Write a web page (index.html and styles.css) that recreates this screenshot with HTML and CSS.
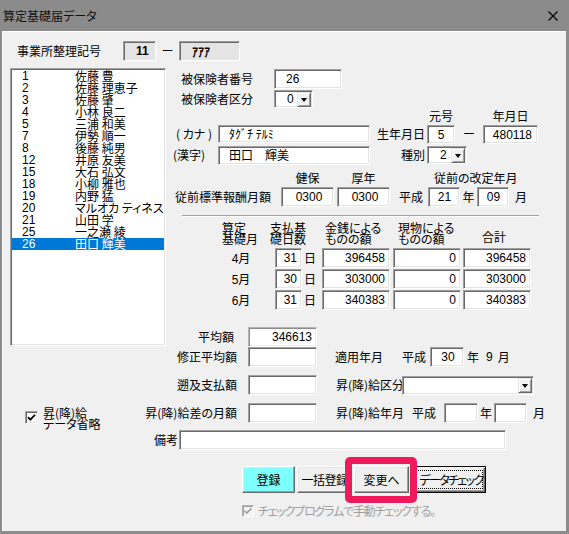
FILE: index.html
```html
<!DOCTYPE html>
<html lang="ja">
<head>
<meta charset="utf-8">
<title>算定基礎届データ</title>
<link rel="stylesheet" href="styles.css">
</head>
<body>
<div class="win">
  <div class="titlebar">
    <span class="title">算定基礎届データ</span>
    <svg class="close" width="10" height="10" viewBox="0 0 10 10"><path d="M0.5 0.5L9.5 9.5M9.5 0.5L0.5 9.5" stroke="#000" stroke-width="1.1" fill="none"/></svg>
  </div>
  <div class="body">
    <div class="office">
      <span class="office-lbl">事業所整理記号</span>
      <span class="ro ro1 n">11</span>
      <span class="dash">ー</span>
      <span class="ro ro2">ｱｱｱ</span>
    </div>
    <div class="main">
      <div class="leftcol">
        <div class="list">
          <div class="item"><span class="num n">1</span><span>佐藤 豊</span></div>
          <div class="item"><span class="num n">2</span><span>佐藤 理恵子</span></div>
          <div class="item"><span class="num n">3</span><span>佐藤 肇</span></div>
          <div class="item"><span class="num n">4</span><span>小林 良二</span></div>
          <div class="item"><span class="num n">5</span><span>三浦 和美</span></div>
          <div class="item"><span class="num n">7</span><span>伊勢 順一</span></div>
          <div class="item"><span class="num n">8</span><span>後藤 純男</span></div>
          <div class="item"><span class="num n">12</span><span>井原 友美</span></div>
          <div class="item"><span class="num n">15</span><span>大石 弘文</span></div>
          <div class="item"><span class="num n">18</span><span>小柳 雅也</span></div>
          <div class="item"><span class="num n">19</span><span>内野 猛</span></div>
          <div class="item"><span class="num n">20</span><span>マルオカ ティネス</span></div>
          <div class="item"><span class="num n">21</span><span>山田 学</span></div>
          <div class="item"><span class="num n">25</span><span>一之瀬 綾</span></div>
          <div class="item sel"><span class="num n">26</span><span>田口 輝美</span></div>
        </div>
        <div class="chkrow">
          <span class="chk"><svg width="11" height="11" viewBox="0 0 11 11"><path d="M2 5.2L4.3 7.6L9 2.8" stroke="#000" stroke-width="1.8" fill="none"/></svg></span>
          <span class="chklbl">昇(降)給<br>データ省略</span>
        </div>
      </div>

      <div class="rightcol">
        <div class="r r-hno">
          <span class="lbl w-hlbl">被保険者番号</span>
          <span class="tb tb-hno n">26</span>
        </div>
        <div class="r r-hkb">
          <span class="lbl w-hlbl">被保険者区分</span>
          <span class="combo cb-hkb"><span class="cv n">0</span><span class="cbtn"></span></span>
        </div>
        <div class="r r-h1">
          <span class="lbl hd-gengo">元号</span>
          <span class="lbl hd-ymd">年月日</span>
        </div>
        <div class="r r-kana">
          <span class="lbl lbl-kana">(&nbsp;カナ&nbsp;)</span>
          <span class="tb tb-name">ﾀｸﾞﾁ ﾃﾙﾐ</span>
          <span class="lbl lbl-r">生年月日</span>
          <span class="tb tb-gengo n">5</span>
          <span class="lbl dash2">ー</span>
          <span class="tb tb-ymd n">480118</span>
        </div>
        <div class="r r-kanji">
          <span class="lbl lbl-kanji">(漢字)</span>
          <span class="tb tb-name tb-kanji">田口　輝美</span>
          <span class="lbl lbl-r">種別</span>
          <span class="combo cb-shu"><span class="cv n">2</span><span class="cbtn"></span></span>
        </div>
        <div class="r r-h2">
          <span class="lbl hd-kenpo">健保</span>
          <span class="lbl hd-kounen">厚年</span>
          <span class="lbl hd-jyuzen">従前の改定年月</span>
        </div>
        <div class="r r-std">
          <span class="lbl lbl-std">従前標準報酬月額</span>
          <span class="tb tb-std n">0300</span>
          <span class="tb tb-std tb-std2 n">0300</span>
          <span class="lbl lbl-hs">平成</span>
          <span class="tb tb-yy n">21</span>
          <span class="lbl lbl-nen">年</span>
          <span class="tb tb-yy n">09</span>
          <span class="lbl lbl-tsuki">月</span>
        </div>
        <div class="sep"></div>

        <div class="tr thead">
          <span class="th th1">算定<br>基礎月</span>
          <span class="th th2">支払基<br>礎日数</span>
          <span class="th th3">金銭による<br>ものの額</span>
          <span class="th th4">現物による<br>ものの額</span>
          <span class="th th5">合計</span>
        </div>
        <div class="tr trow trow1">
          <span class="tlbl"><span class="n">4</span>月</span>
          <span class="dcell"><span class="tb tb-day n">31</span><span class="nichi">日</span></span>
          <span class="tb tb-money n">396458</span>
          <span class="tb tb-money n">0</span>
          <span class="tb tb-money n">396458</span>
        </div>
        <div class="tr trow">
          <span class="tlbl"><span class="n">5</span>月</span>
          <span class="dcell"><span class="tb tb-day n">30</span><span class="nichi">日</span></span>
          <span class="tb tb-money n">303000</span>
          <span class="tb tb-money n">0</span>
          <span class="tb tb-money n">303000</span>
        </div>
        <div class="tr trow">
          <span class="tlbl"><span class="n">6</span>月</span>
          <span class="dcell"><span class="tb tb-day n">31</span><span class="nichi">日</span></span>
          <span class="tb tb-money n">340383</span>
          <span class="tb tb-money n">0</span>
          <span class="tb tb-money n">340383</span>
        </div>

        <div class="r r-l1">
          <span class="llbl llbl-avg">平均額</span>
          <span class="tb tb-amt tb-ro n">346613</span>
        </div>
        <div class="r r-l2">
          <span class="llbl">修正平均額</span>
          <span class="tb tb-amt"></span>
          <span class="lbl lbl-mid">適用年月</span>
          <span class="lbl lbl-hs2">平成</span>
          <span class="tb tb-y30 n">30</span>
          <span class="lbl lbl-nen2">年</span>
          <span class="lbl lbl-9 n">9</span>
          <span class="lbl lbl-tsuki9">月</span>
        </div>
        <div class="r r-l3">
          <span class="llbl">遡及支払額</span>
          <span class="tb tb-amt"></span>
          <span class="lbl lbl-kubun">昇(降)給区分</span>
          <span class="combo cb-kubun"><span class="cv"></span><span class="cbtn"></span></span>
        </div>
        <div class="r r-l4">
          <span class="llbl">昇(降)給差の月額</span>
          <span class="tb tb-amt"></span>
          <span class="lbl lbl-shonen">昇(降)給年月</span>
          <span class="lbl lbl-hs3">平成</span>
          <span class="tb tb-y34"></span>
          <span class="lbl lbl-nen3">年</span>
          <span class="tb tb-y33"></span>
          <span class="lbl lbl-tsuki2">月</span>
        </div>
        <div class="r r-l5">
          <span class="llbl llbl-bk">備考</span>
          <span class="tb tb-biko"></span>
        </div>

        <div class="btns">
          <span class="btn btn-reg">登録</span>
          <span class="btn btn-bulk">一括登録</span>
          <span class="hl"><span class="btn btn-chg">変更へ</span></span>
          <span class="btn btn-def"><span class="focus">データチェック</span></span>
        </div>
        <div class="auto">
          <span class="chk chk-dis"><svg width="10" height="10" viewBox="0 0 10 10"><path d="M1.6 4.8L3.8 7L8.4 2.4" stroke="#a0a0a0" stroke-width="1.7" fill="none"/></svg></span>
          <span class="auto-lbl">チェックプログラムで手動チェックする。</span>
        </div>
      </div>
    </div>
  </div>
</div>
</body>
</html>
```

FILE: styles.css
```css
* { box-sizing: border-box; }
html, body { margin: 0; padding: 0; }
body {
  width: 569px;
  height: 534px;
  overflow: hidden;
  background: #8b8b8b;
  font-family: "Noto Sans CJK JP", "Noto Sans", sans-serif;
  font-size: 12px;
  color: #000;
  font-feature-settings: "palt";
}
.n { font-family: "Liberation Sans Narrow", "Liberation Sans", sans-serif; font-feature-settings: normal; }

.win {
  width: 569px;
  height: 534px;
  background: #8b8b8b;
  padding: 0 3px 3px 2px;
  display: flex;
  flex-direction: column;
}
.titlebar {
  height: 31px;
  flex: none;
  display: flex;
  align-items: center;
  justify-content: space-between;
  padding: 0 8px 0 1px;
}
.title { color: #111; line-height: 14px; }
.close { display: block; }

.body {
  height: 500px;
  background: #f0f0f0;
  box-shadow: inset 1px 1px 0 #fff;
  display: flex;
  flex-direction: column;
}

/* office row */
.office {
  margin-top: 10px;
  padding-left: 15px;
  height: 20px;
  display: flex;
  align-items: center;
  white-space: nowrap;
}
.office-lbl { width: 106px; line-height: 14px; }
.ro {
  height: 20px;
  display: flex;
  align-items: center;
  padding-left: 12px;
  background: #e4e4e4;
  border: 1px solid;
  border-color: #a0a0a0 #fff #fff #a0a0a0;
  box-shadow: inset 1px 1px 0 #696969, inset -1px -1px 0 #e3e3e3;
  font-weight: bold;
}
.ro1 { width: 33px; }
.ro2 { width: 61px; }
.dash { width: 23px; text-align: center; line-height: 14px; }

/* main */
.main { margin-top: 7px; display: flex; }
.leftcol { margin-left: 8px; width: 156px; flex: none; }
.rightcol { margin-left: 4px; flex: 1; min-width: 0; }

.list {
  height: 278px;
  background: #fff;
  padding: 1px;
  border: 1px solid;
  border-color: #a0a0a0 #fff #fff #a0a0a0;
  box-shadow: inset 1px 1px 0 #696969, inset -1px -1px 0 #e3e3e3;
}
.item {
  height: 12px;
  line-height: 12px;
  display: flex;
  padding-left: 10px;
  white-space: nowrap;
}
.item .num { width: 53px; }
.item.sel { background: #0078d7; color: #fff; }

.chkrow {
  margin-top: 59px;
  height: 25px;
  display: flex;
  align-items: center;
  padding-left: 15px;
}
.chk {
  width: 13px;
  height: 13px;
  display: flex;
  align-items: center;
  justify-content: center;
  background: #fff;
  border: 1px solid;
  border-color: #a0a0a0 #fff #fff #a0a0a0;
  box-shadow: inset 1px 1px 0 #696969, inset -1px -1px 0 #e3e3e3;
}
.chklbl { margin-left: 5px; line-height: 11px; white-space: nowrap; }

/* generic controls */
.r { display: flex; align-items: center; white-space: nowrap; }
.lbl { display: block; line-height: 14px; flex: none; }
.tb {
  display: flex;
  align-items: center;
  flex: none;
  padding: 0 4px;
  background: #fff;
  border: 1px solid;
  border-color: #a0a0a0 #fff #fff #a0a0a0;
  box-shadow: inset 1px 1px 0 #696969, inset -1px -1px 0 #e3e3e3;
  line-height: 14px;
  white-space: nowrap;
  overflow: hidden;
}
.tb-ro { border-color: #b4b4b4 #fff #fff #b4b4b4; box-shadow: inset 1px 1px 0 #8c8c8c, inset -1px -1px 0 #ececec; }
.combo {
  display: flex;
  align-items: center;
  flex: none;
  padding-right: 1px;
  background: #fff;
  border: 1px solid;
  border-color: #a0a0a0 #fff #fff #a0a0a0;
  box-shadow: inset 1px 1px 0 #696969, inset -1px -1px 0 #e3e3e3;
}
.cv { flex: 1; padding-left: 12px; line-height: 14px; }
.cbtn {
  width: 14px;
  height: 15px;
  display: flex;
  align-items: center;
  justify-content: center;
  background: #f0f0f0;
  border: 1px solid;
  border-color: #e3e3e3 #696969 #696969 #e3e3e3;
  box-shadow: inset 1px 1px 0 #fff, inset -1px -1px 0 #a0a0a0;
}
.cbtn::after {
  content: "";
  border-left: 3.5px solid transparent;
  border-right: 3.5px solid transparent;
  border-top: 4px solid #000;
  margin-top: 1px;
}

/* upper right form */
.r-hno { margin-top: 1px; height: 20px; }
.r-hkb { margin-top: 1px; height: 18px; }
.w-hlbl { margin-left: 11px; width: 93px; }
.tb-hno { width: 68px; height: 20px; padding-left: 11px; }
.cb-hkb { width: 39px; height: 18px; }

.r-h1 { margin-top: 1px; height: 14px; }
.hd-gengo { margin-left: 257px; width: 28px; text-align: center; }
.hd-ymd { margin-left: 28px; width: 55px; text-align: center; }

.r-kana { margin-top: 2px; height: 19px; align-items: flex-start; }
.r-kana .lbl { margin-top: 2px; }
.lbl-kana { margin-left: 6px; width: 42px; }
.tb-name { width: 152px; height: 18px; padding-left: 10px; }
.lbl-r { width: 57px; text-align: right; padding-right: 2px; }
.tb-gengo { width: 28px; height: 19px; justify-content: center; }
.dash2 { width: 28px; text-align: center; }
.tb-ymd { width: 55px; height: 19px; justify-content: flex-end; padding-right: 5px; }

.r-kanji { margin-top: 1px; height: 20px; }
.lbl-kanji { margin-left: 3px; width: 45px; }
.tb-kanji { height: 19px; }
.cb-shu { width: 40px; height: 18px; }

.r-h2 { margin-top: 6px; height: 14px; }
.hd-kenpo { margin-left: 111px; width: 53px; text-align: center; }
.hd-kounen { margin-left: 3px; width: 53px; text-align: center; }
.hd-jyuzen { margin-left: 44px; }

.r-std { margin-top: 2px; height: 20px; }
.lbl-std { margin-left: 5px; width: 106px; }
.tb-std { width: 53px; height: 20px; justify-content: center; padding-left: 7px; }
.tb-std2 { margin-left: 3px; }
.lbl-hs { margin-left: 9px; width: 29px; }
.tb-yy { width: 32px; height: 20px; justify-content: center; padding-left: 5px; }
.lbl-nen { width: 17px; text-align: center; }
.lbl-tsuki { margin-left: 6px; }

.sep {
  margin: 8px 0 0 12px;
  width: 357px;
  height: 2px;
  border-top: 1px solid #a0a0a0;
  border-bottom: 1px solid #fff;
}

/* table */
.tr {
  display: grid;
  grid-template-columns: 58px 52px 71px 70px 68px;
  margin-left: 42px;
  white-space: nowrap;
}
.thead { margin-top: 5px; height: 23px; align-items: start; }
.th { line-height: 11px; }
.th1 { padding-left: 10px; }
.th3 { padding-left: 3px; }
.th4 { padding-left: 5px; }
.th5 { padding-left: 19px; padding-top: 9px; line-height: 12px; }
.trow { height: 20px; margin-top: 1px; align-items: center; }
.trow1 { margin-top: 3px; }
.tlbl { text-align: center; line-height: 14px; }
.dcell { display: flex; align-items: center; }
.tb-day { margin-left: 5px; width: 27px; height: 20px; justify-content: flex-end; }
.nichi { margin-left: 2px; line-height: 14px; }
.tb-money { width: 68px; height: 20px; justify-content: flex-end; }

/* lower form */
.llbl {
  width: 67px;
  flex: none;
  display: flex;
  justify-content: flex-end;
  line-height: 14px;
  white-space: nowrap;
}
.llbl-avg { padding-right: 3px; }
.tb-amt { margin-left: 11px; width: 69px; height: 20px; justify-content: flex-end; }
.r-l1 { margin-top: 17px; height: 20px; }
.r-l2 { height: 20px; }
.r-l3 { margin-top: 8px; height: 20px; }
.r-l4 { margin-top: 8px; height: 20px; }
.r-l5 { margin-top: 7px; height: 20px; }

.lbl-mid { margin-left: 18px; width: 67px; }
.lbl-hs2 { width: 28px; }
.tb-y30 { width: 34px; height: 20px; justify-content: center; padding-left: 6px; }
.lbl-nen2 { margin-left: 3px; }
.lbl-9 { margin-left: 7px; }
.lbl-tsuki9 { margin-left: 5px; }

.lbl-kubun { margin-left: 19px; width: 66px; }
.cb-kubun { width: 132px; height: 19px; }

.lbl-shonen { margin-left: 19px; width: 76px; }
.lbl-hs3 { width: 32px; }
.tb-y34 { width: 34px; height: 20px; }
.lbl-nen3 { width: 16px; text-align: center; }
.tb-y33 { width: 33px; height: 20px; }
.lbl-tsuki2 { margin-left: 6px; }

.llbl-bk { width: 8px; }
.tb-biko { margin-left: 1px; width: 327px; height: 20px; }

/* buttons */
.btns { margin-top: 16px; margin-left: 72px; height: 27px; display: flex; }
.btn {
  height: 27px;
  display: flex;
  align-items: center;
  justify-content: center;
  background: #f0f0f0;
  border: 1px solid;
  border-color: #fff #696969 #696969 #fff;
  box-shadow: inset -1px -1px 0 #a0a0a0, inset 1px 1px 0 #e3e3e3;
  white-space: nowrap;
  line-height: 14px;
}
.btn-reg { width: 53px; background: #80ffff; }
.btn-bulk { margin-left: 2px; width: 55px; letter-spacing: -0.5px; }
.hl { margin-left: 2px; position: relative; display: flex; }
.hl::after {
  content: "";
  position: absolute;
  left: -9px;
  top: -9px;
  right: -8px;
  bottom: -10px;
  border: 7px solid #ef1a5c;
  border-radius: 5px;
}
.btn-chg { width: 55px; }
.btn-def {
  margin-left: 4px;
  width: 73px;
  border: 1px solid #000;
  box-shadow: inset 1px 1px 0 #fff, inset -1px -1px 0 #696969, inset -2px -2px 0 #a0a0a0;
  padding: 3px;
}
.focus {
  flex: 1;
  align-self: stretch;
  display: flex;
  align-items: center;
  justify-content: center;
  outline: 1px dotted #000;
  outline-offset: -1px;
  letter-spacing: -1.6px;
  padding-left: 3px;
}

.auto {
  margin-top: 12px;
  margin-left: 72px;
  height: 12px;
  display: flex;
  align-items: center;
  color: #a0a0a0;
  white-space: nowrap;
}
.chk-dis {
  width: 12px;
  height: 12px;
  background: #f4f4f4;
  border-color: #b4b4b4 #fff #fff #b4b4b4;
  box-shadow: inset 1px 1px 0 #a0a0a0;
}
.auto-lbl { margin-left: 4px; line-height: 14px; letter-spacing: -1.2px; }
```
